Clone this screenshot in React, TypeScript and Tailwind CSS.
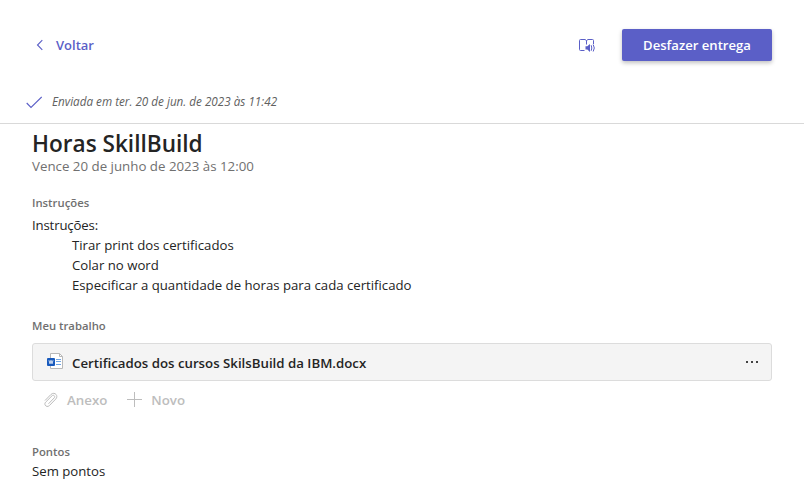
export default function App() {
  return (
    <div className="h-[497px] w-[804px] overflow-hidden bg-white font-['Open_Sans',sans-serif] text-[13.2px] text-[#242424]">
      <header className="flex h-[124px] flex-col border-b border-[#d9d9d9]">
        <div className="flex h-[61px] items-end px-8">
          <button className="flex h-8 items-center font-semibold text-[#5b5fc7]">
            <svg className="mr-2 size-4" viewBox="0 0 16 16" fill="none" stroke="currentColor" strokeWidth="1.1"><path d="M10.3 3.2 5.5 8l4.8 4.8" /></svg>
            <span className="pt-0.5 text-[13px]">Voltar</span>
          </button>
          <button aria-label="Leitor imersivo" className="mr-[27px] ml-auto flex h-8 items-center text-[#5b5fc7]">
            <svg className="size-4" viewBox="0 0 16 16" fill="none" stroke="currentColor">
              <path d="M5.5 13.5h-4q-1 0-1-1v-9q0-1 1-1H6l1.5 1 1.5-1h4.5q1 0 1 1V7M7.5 3.5v4" />
              <path d="M6.5 9.3h1.8L11 7v8l-2.700-2.500H6.500Z" fill="currentColor" stroke="none" />
              <path d="M12.2 8.200q1.200 2.800 0 5.600M14.200 7.500q2.200 3.500 0 7" />
            </svg>
          </button>
          <button className="h-8 w-[150px] rounded-[2px] bg-[#5b5fc7] pt-0.5 text-[13.1px] font-semibold text-white shadow-[0_2px_4px_rgba(0,0,0,0.25)]">Desfazer entrega</button>
        </div>
        <div className="mt-8 flex h-[18px] items-center text-[11.7px] text-[#616161] italic">
          <svg className="mr-2.5 ml-[26px] size-4 text-[#5b5fc7]" viewBox="0 0 16 16" fill="none" stroke="currentColor" strokeWidth="1.1"><path d="m.7 9 4.3 4.500L15.700 3" /></svg>
          <span>Enviada em ter. 20 de jun. de 2023 às 11:42</span>
        </div>
      </header>
      <main className="px-8 pt-[5px]">
        <h1 className="text-[22.6px] leading-[30px] font-semibold">Horas SkillBuild</h1>
        <p className="-mt-px text-[13.3px] leading-4 text-[#707070]">Vence 20 de junho de 2023 às 12:00</p>
        <section className="mt-[21px]">
          <h2 className="text-[11.3px] leading-4 font-semibold text-[#707070]">Instruções</h2>
          <div className="mt-1 leading-5">
            <p className="tracking-[-0.15px]">Instruções:</p>
            <ul className="pl-10">
              <li>Tirar print dos certificados</li>
              <li>Colar no word</li>
              <li>Especificar a quantidade de horas para cada certificado</li>
            </ul>
          </div>
        </section>
        <section className="mt-[23px]">
          <h2 className="text-[11.3px] leading-4 font-semibold text-[#707070]">Meu trabalho</h2>
          <div className="mt-[9px] flex h-[38px] items-center rounded-[3px] border border-[#dcdcdc] bg-[#f4f4f4] pr-[11px] pl-[14px]">
            <svg className="mr-[9px] h-4 w-4 shrink-0 -translate-y-px" viewBox="0 0 16 16" fill="none">
              <path d="M3.500.5h9l3 3v12h-12z" fill="#fff" stroke="#b8b8b8" />
              <path d="M12.500.5v3h3" stroke="#b8b8b8" />
              <path d="M9 6.500h5M9 8.500h5M9 11.500h5" stroke="#6fa5e5" />
              <rect y="5" width="8" height="8" rx="1" fill="#185abd" />
              <path d="m2 7.300 1 3.500 1-3.500 1 3.500 1-3.500" stroke="#fff" strokeWidth=".8" />
            </svg>
            <span className="pt-[3px] text-[13.25px] font-semibold">Certificados dos cursos SkilsBuild da IBM.docx</span>
            <button aria-label="Mais opções" className="ml-auto">
              <svg className="h-4 w-4" viewBox="0 0 16 16" fill="#424242"><path d="M2 7h2v2H2zM7 7h2v2H7zM12 7h2v2h-2z" /></svg>
            </button>
          </div>
          <div className="mt-[9px] flex h-5 items-center pl-[11px] text-[13.3px] font-semibold text-[#bdbdbd]">
            <button className="flex items-center gap-2">
              <svg className="size-4" viewBox="0 0 16 16" fill="none" stroke="currentColor"><path d="m2 8.500 5.800-5.900c3.600-3.500 8.200 1 4.900 4.500l-6.300 6.500c-2.500 2.500-6.200-.9-3.700-3.500L9 3.800c1.500-1.500 3.700.5 2.200 2.100L5.500 11.800" /></svg>
              <span className="pt-0.5">Anexo</span>
            </button>
            <button className="ml-5 flex items-center gap-2">
              <svg className="size-4" viewBox="0 0 16 16" stroke="currentColor"><path d="M7.500 0v15M0 7.500h15" /></svg>
              <span className="pt-0.5">Novo</span>
            </button>
          </div>
        </section>
        <section className="mt-[34px]">
          <h2 className="text-[11.3px] leading-4 font-semibold text-[#707070]">Pontos</h2>
          <p className="mt-px leading-5">Sem pontos</p>
        </section>
      </main>
    </div>
  );
}
